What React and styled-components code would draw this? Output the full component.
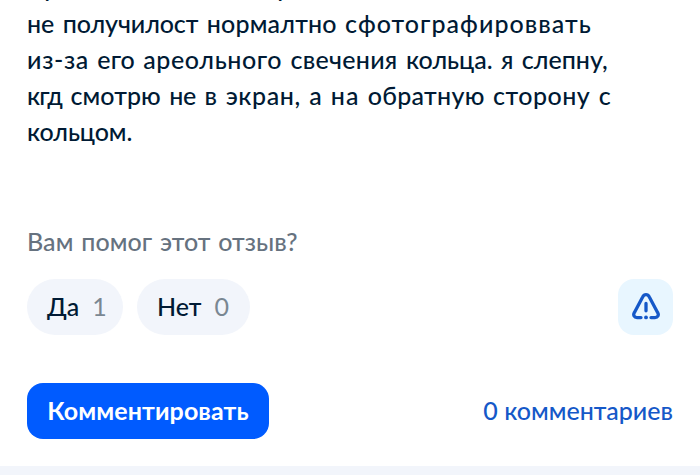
import React from "react";
import styled, { createGlobalStyle } from "styled-components";

const GlobalStyle = createGlobalStyle`
  * {
    box-sizing: border-box;
  }
  body {
    margin: 0;
    background-color: #ffffff;
    overflow: hidden;
  }
`;

const Page = styled.main`
  display: flex;
  flex-direction: column;
  width: 700px;
  height: 475px;
  overflow: hidden;
  font-family: Lato, "Open Sans", sans-serif;
  font-size: 25px;
  color: #001a34;
`;

const Review = styled.div`
  display: flex;
  flex-direction: column;
  justify-content: flex-end;
  height: 149px;
  padding: 0 27px;
  overflow: hidden;
  font-weight: 500;
`;

const Line = styled.div`
  flex: none;
  height: 36px;
  line-height: 36px;
  white-space: nowrap;
  word-spacing: 2px;
`;

const Word = styled.span`
  letter-spacing: ${({ $spacing }) => $spacing}px;
`;

const Question = styled.div`
  margin-top: 74px;
  height: 36px;
  padding: 0 27px;
  line-height: 36px;
  color: #66727f;
  font-weight: 500;
  letter-spacing: 0.05px;
  word-spacing: 1.5px;
`;

const Row = styled.div`
  display: flex;
  align-items: center;
  gap: 14px;
  height: 56px;
  margin-top: ${({ $top }) => $top}px;
  padding: 0 27px;
`;

const Vote = styled.button`
  display: flex;
  align-items: center;
  gap: 13px;
  width: ${({ $width }) => $width}px;
  height: 56px;
  padding: 0 20px 2px;
  border: 0;
  border-radius: 28px;
  background-color: #f2f5fb;
  color: #001a34;
  font: inherit;
  font-weight: 500;
`;

const Count = styled.span`
  color: #7a8792;
  font-weight: 400;
`;

const ReportButton = styled.button`
  display: flex;
  align-items: center;
  justify-content: center;
  width: 55px;
  height: 56px;
  margin-left: auto;
  padding: 0;
  border: 0;
  border-radius: 16px;
  background-color: #e8f6ff;
  color: #1558c8;
`;

const CommentButton = styled.button`
  width: 242px;
  height: 56px;
  padding: 0 0 2px;
  border: 0;
  border-radius: 16px;
  background-color: #005bff;
  color: #ffffff;
  font: inherit;
  font-weight: 700;
  letter-spacing: 0.1px;
`;

const CommentsLink = styled.span`
  margin-left: auto;
  padding-bottom: 2px;
  color: #1558c8;
  font-weight: 500;
`;

const Footer = styled.div`
  height: 9px;
  margin-top: auto;
  background-color: #f2f5fb;
`;

const WarningIcon = () => (
  <svg width="28" height="28" viewBox="0 0 28 28" fill="none">
    <path
      d="M9 24.6H5C2.2 24.6 .9 22 2.3 19.7L10.8 3.8C12.2 1 15.8 1 17.2 3.8L25.7 19.7C27.1 22 25.8 24.6 23 24.6H19M14 10.4V17.8"
      stroke="currentColor"
      strokeWidth="3.3"
      strokeLinecap="round"
      strokeLinejoin="round"
    />
    <circle cx="14" cy="24.4" r="1.9" fill="currentColor" />
  </svg>
);

// [word, letter spacing]
const lines = [
  [["Красиво", 0.5], ["светится", 0.8], ["экран", 0.5]],
  [["не", 0], ["получилост", -0.1], ["нормалтно", 0.2], ["сфотографироввать", 1.05]],
  [
    ["из-за", 0.7],
    ["его", 0.1],
    ["ареольного", 0.6],
    ["свечения", 0.3],
    ["кольца.", 0],
    ["я", 0],
    ["слепну,", 0],
  ],
  [
    ["кгд", -0.8],
    ["смотрю", 0.1],
    ["не", -0.2],
    ["в", 0.4],
    ["экран,", 0.6],
    ["а", 0.8],
    ["на", 1],
    ["обратную", 0.3],
    ["сторону", 0.5],
    ["с", 0],
  ],
  [["кольцом.", -0.1]],
];

const App = () => (
  <>
    <GlobalStyle />
    <Page>
      <Review>
        {lines.map((words, i) => (
          <Line key={i}>
            {words.map(([word, spacing], j) => (
              <React.Fragment key={j}>
                <Word $spacing={spacing}>{word}</Word>{" "}
              </React.Fragment>
            ))}
          </Line>
        ))}
      </Review>
      <Question>Вам помог этот отзыв?</Question>
      <Row $top={20}>
        <Vote $width={96}>
          Да <Count>1</Count>
        </Vote>
        <Vote $width={113}>
          Нет <Count>0</Count>
        </Vote>
        <ReportButton aria-label="Пожаловаться">
          <WarningIcon />
        </ReportButton>
      </Row>
      <Row $top={48}>
        <CommentButton>Комментировать</CommentButton>
        <CommentsLink>0 комментариев</CommentsLink>
      </Row>
      <Footer />
    </Page>
  </>
);

export default App;
